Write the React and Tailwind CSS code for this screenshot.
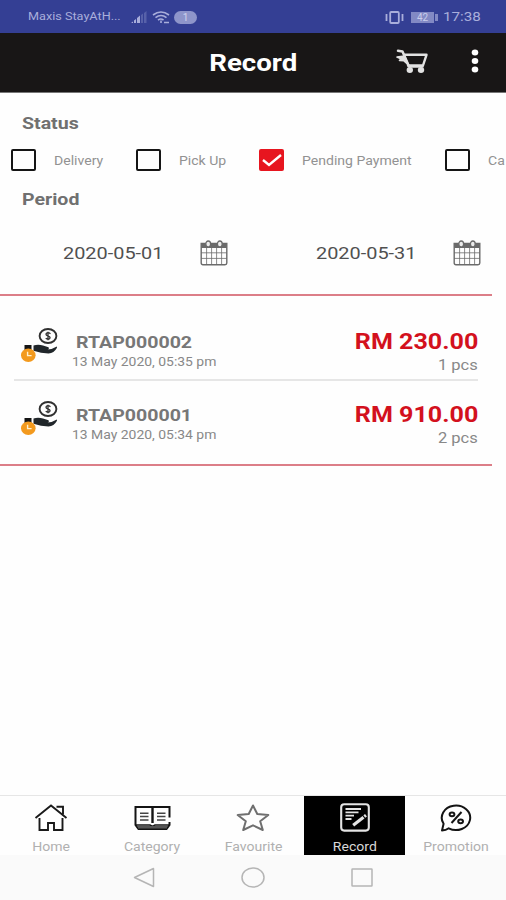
import React, { useState } from 'react';

const statusOptions = [
    { label: 'Delivery', width: 'w-[125px]' },
    { label: 'Pick Up', width: 'w-[123px]' },
    { label: 'Pending Payment', width: 'w-[186px]' },
    { label: 'Ca', width: 'w-[61px]' },
];

const records = [
    { id: 'RTAP000002', date: '13 May 2020, 05:35 pm', total: 'RM 230.00', qty: '1 pcs' },
    { id: 'RTAP000001', date: '13 May 2020, 05:34 pm', total: 'RM 910.00', qty: '2 pcs' },
];

const SignalIcon = () => (
    <svg width="17" height="13" viewBox="0 0 17 13" fill="#a9aedb">
        <path d="M0 12 L2 10.5 V12 Z M3 9.5 L5 8 V12 H3 Z M6 7 L9 4.5 V12 H6 Z" />
        <path d="M10 4 L12 2.5 V12 H10 Z M13 2 L15.5 0 V12 H13 Z" opacity="0.3" />
    </svg>
);

const WifiIcon = () => (
    <svg width="18" height="13" viewBox="0 0 18 13" fill="none" stroke="#a9aedb" strokeWidth="1.6">
        <path d="M1 4 Q9 -2 17 4" />
        <path d="M3.5 6.7 Q9 2.4 14.5 6.7" />
        <path d="M6 9.2 Q9 6.8 11.5 9.2" />
        <path d="M9 9.5 V12 M12 11.5 H17" />
    </svg>
);

const VibrateIcon = () => (
    <svg width="19" height="13" viewBox="0 0 19 13" fill="none" stroke="#a9aedb">
        <rect x="5.2" y="1" width="8.6" height="11" rx="1" strokeWidth="1.8" />
        <path d="M1.5 3 V10 M17.5 3 V10" strokeWidth="1.8" />
    </svg>
);

const CartIcon = () => (
    <svg width="33" height="25" viewBox="0 0 33 25" fill="none" stroke="#e2e2e2" strokeLinecap="round" strokeLinejoin="round">
        <path d="M3 1.8 L7.5 2.6 L14 17.5 H27.5" strokeWidth="2.5" />
        <path d="M9.5 5.8 H31.5 L28 16.5 H13" strokeWidth="2.4" />
        <path d="M2 8 L9.5 7 L13.5 16 L9 11.8 L4.5 11.5 L6 9.8 Z" fill="#e2e2e2" strokeWidth="1.6" />
        <ellipse cx="14.8" cy="21" rx="3.2" ry="3" fill="#e2e2e2" stroke="none" />
        <ellipse cx="26" cy="21" rx="3.2" ry="3" fill="#e2e2e2" stroke="none" />
    </svg>
);

const CalendarIcon = () => (
    <svg width="28" height="26" viewBox="0 0 28 26" fill="none" stroke="#6b6b6b">
        <path d="M1.2 3.5 H26.8 V23 Q26.8 24.7 25 24.7 H3 Q1.2 24.7 1.2 23 Z" strokeWidth="1.4" />
        <path d="M1.2 3.5 H26.8 V8 H1.2 Z" fill="#6b6b6b" stroke="none" />
        <path d="M1 12.8 H27 M1 18.4 H27 M6.6 8 V24.5 M11.6 8 V24.5 M16.6 8 V24.5 M21.6 8 V24.5" strokeWidth="0.8" />
        <ellipse cx="8.2" cy="4" rx="2.4" ry="3" fill="#ededed" strokeWidth="1.3" />
        <ellipse cx="19.8" cy="4" rx="2.4" ry="3" fill="#ededed" strokeWidth="1.3" />
    </svg>
);

const PaymentIcon = () => (
    <svg width="38" height="35" viewBox="0 0 38 35" fill="none">
        <ellipse cx="27" cy="8" rx="8.4" ry="7" stroke="#303030" strokeWidth="1.9" />
        <path d="M29.5 5.7 Q27 3.8 25.3 5.4 Q24.3 7.2 27 8 Q29.9 8.9 28.7 10.5 Q27 12 24.7 10.3 M27 3.7 V12.3" stroke="#303030" strokeWidth="1.3" />
        <path d="M3.5 17 H10.5 V22 H3.5 Z" fill="#151515" />
        <path d="M12.5 17.6 Q17 16 22 17.6 L27.5 19.2 Q28.6 21 26.5 21.4 Q31.5 21.2 35.8 18.4 L36 19.8 Q33 25.2 27.5 25.5 Q20 25.3 12.5 22.7 Z" fill="#20262a" />
        <ellipse cx="7.3" cy="27.3" rx="7.3" ry="6.7" fill="#f39a1e" />
        <path d="M6.6 23.7 V27.6 H10.6" stroke="#fff1d0" strokeWidth="1.4" />
    </svg>
);

const HomeIcon = () => (
    <svg width="34" height="28" viewBox="0 0 34 28" fill="none" stroke="#1a1a1a" strokeWidth="1.9">
        <path d="M1.5 14 L17 1.5 L32.5 14" />
        <path d="M22.5 2.8 H29 V10.5" />
        <path d="M5.5 14 V26 H14 V19 H20 V26 H28.5 V14" />
    </svg>
);

const CategoryIcon = () => (
    <svg width="37" height="26" viewBox="0 0 37 26" fill="none" stroke="#141414" strokeWidth="2">
        <path d="M35.5 12.5 V2 H1.5 V20 L4.5 24 H32.5 L35.5 20 V17" />
        <path d="M18.5 2 V18" strokeWidth="2.4" />
        <path d="M2 20 H16 L18.5 21.5 L21 20 H35" strokeWidth="1.6" />
        <path d="M4 22.2 H33" stroke="#555" strokeWidth="2.6" />
        <path d="M6 8.2 H14.5 M6 11.6 H14.5 M6 15 H14.5 M23 8.2 H31.5 M23 11.6 H31.5 M23 15 H31.5" stroke="#444" strokeWidth="1.5" />
    </svg>
);

const FavouriteIcon = () => (
    <svg width="34" height="28" viewBox="0 0 34 28" fill="none" stroke="#6f6f6f" strokeWidth="2" strokeLinejoin="round">
        <path d="M17 1.5 L21.3 10 L32.3 11 L24.2 17.2 L26.8 26 L17 21.3 L7.2 26 L9.8 17.2 L1.7 11 L12.7 10 Z" />
    </svg>
);

const RecordIcon = () => (
    <svg width="30" height="29" viewBox="0 0 30 29" fill="none" stroke="#e4e4e4">
        <rect x="1.2" y="1.2" width="27.6" height="26.4" rx="3" strokeWidth="2.1" />
        <path d="M5.5 6 H21 M5.5 9.4 H18.5 M5.5 12.7 H14 M5.5 16 H11.5" strokeWidth="1.8" />
        <path d="M13.2 22.2 L23.5 14.2" strokeWidth="3.2" />
        <path d="M24.3 13.5 L26 12.2" strokeWidth="3" />
    </svg>
);

const PromotionIcon = () => (
    <svg width="32" height="28" viewBox="0 0 32 28" fill="none" stroke="#141414" strokeWidth="2">
        <path d="M2 26.5 L3.6 19.8 A14.2 12.2 0 1 1 8.7 24.3 Q6 26.3 2 26.5 Z" strokeLinejoin="round" />
        <ellipse cx="12" cy="10.3" rx="2.4" ry="1.9" />
        <ellipse cx="20.6" cy="17.3" rx="2.4" ry="1.9" />
        <path d="M21.5 8 L11.5 19" />
    </svg>
);

const tabs = [
    { label: 'Home', icon: HomeIcon },
    { label: 'Category', icon: CategoryIcon },
    { label: 'Favourite', icon: FavouriteIcon },
    { label: 'Record', icon: RecordIcon },
    { label: 'Promotion', icon: PromotionIcon },
];

const StatusBar = () => (
    <div className="h-[33px] bg-[#343f94] flex items-center justify-between pl-[28px] pr-[24px] pt-px text-[#a9aedb]">
        <div className="flex items-center">
            <span className="w-[103px] text-[11.5px] whitespace-nowrap"><span className="inline-block origin-left scale-x-[1.1]">Maxis StayAtH...</span></span>
            <SignalIcon />
            <span className="ml-[4px]"><WifiIcon /></span>
            <span className="ml-[4px] w-[23px] h-[13px] rounded-full bg-[#8e95ca] text-[#d0d3ee] text-[10px] leading-[13px] text-center">1</span>
        </div>
        <div className="flex items-center">
            <VibrateIcon />
            <span className="ml-[7px] w-[23px] h-[11px] bg-[#8289c4] text-[#c9cdec] text-[10px] leading-[11px] text-center">42</span>
            <span className="ml-[1px] w-[3px] h-[7px] bg-[#8289c4]" />
            <span className="ml-[5px] w-[39px] text-[13px] whitespace-nowrap"><span className="inline-block origin-left scale-x-[1.17]">17:38</span></span>
        </div>
    </div>
);

const Header = () => (
    <div className="h-[60px] bg-[#181616] border-b border-[#777] grid grid-cols-[1fr_auto_1fr] items-center">
        <span />
        <h1 className="pt-px text-white text-[24px] leading-[28px] font-bold scale-x-[1.15]">Record</h1>
        <div className="flex items-center justify-end pr-[27px] gap-[43px] pb-[3px]">
            <CartIcon />
            <svg width="8" height="24" viewBox="0 0 8 24" fill="#fff">
                <ellipse cx="4" cy="3.5" rx="3.3" ry="2.9" />
                <ellipse cx="4" cy="12" rx="3.3" ry="2.9" />
                <ellipse cx="4" cy="20.5" rx="3.3" ry="2.9" />
            </svg>
        </div>
    </div>
);

const StatusCheckbox = ({ option, checked, onChange }) => (
    <button type="button" onClick={onChange} className={`${option.width} shrink-0 flex items-center`}>
        {checked ? (
            <span className="w-[25px] h-[22px] rounded-[2px] bg-[#e7151f] flex items-center justify-center">
                <svg width="20" height="14" viewBox="0 0 20 14" fill="none" stroke="#fff" strokeWidth="2.4">
                    <path d="M1 7 L7 12 L19 2" />
                </svg>
            </span>
        ) : (
            <span className="w-[25px] h-[22px] rounded-[2px] border-2 border-[#151515]" />
        )}
        <span className="ml-[18px] pt-[2px] text-[12px] text-[#929292] whitespace-nowrap origin-left scale-x-[1.17]">{option.label}</span>
    </button>
);

const DateField = ({ value }) => (
    <div className="w-[253px] flex items-center pl-[63px]">
        <span className="w-[137px] pt-[2px] text-[17px] text-[#505050] whitespace-nowrap"><span className="inline-block origin-left scale-x-[1.17]">{value}</span></span>
        <CalendarIcon />
    </div>
);

const RecordRow = ({ record }) => (
    <div className="h-[73px] flex items-start pl-[7px]">
        <div className="pt-[20px]"><PaymentIcon /></div>
        <div className="flex-1 pl-[13px] pt-[23px]">
            <p className="pl-[4px] text-[17px] leading-[22px] font-bold text-[#777]"><span className="inline-block origin-left scale-x-[1.15]">{record.id}</span></p>
            <p className="pt-px text-[12px] leading-[16px] text-[#888]"><span className="inline-block origin-left scale-x-[1.16]">{record.date}</span></p>
        </div>
        <div className="pt-[21px] text-right">
            <p className="text-[22px] leading-[26px] font-bold text-[#d3111d]"><span className="inline-block origin-right scale-x-[1.14]">{record.total}</span></p>
            <p className="text-[14px] leading-[20px] text-[#888]"><span className="inline-block origin-right scale-x-[1.18]">{record.qty}</span></p>
        </div>
    </div>
);

const TabBar = ({ active, onSelect }) => (
    <div className="h-[60px] border-t border-[#e6e6e6] grid grid-cols-5">
        {tabs.map(({ label, icon: Icon }) => (
            <button
                key={label}
                type="button"
                onClick={() => onSelect(label)}
                className={`flex flex-col items-center pt-[7px] pl-px ${active === label ? 'bg-black text-[#d8d8d8]' : 'text-[#b0b0b0]'}`}
            >
                <span className="h-[29px] flex items-center"><Icon /></span>
                <span className="mt-[8px] text-[12px] leading-[14px] scale-x-[1.17]">{label}</span>
            </button>
        ))}
    </div>
);

const SystemNav = () => (
    <div className="h-[45px] bg-[#fafafa] flex justify-center items-center gap-[86px]">
        <svg width="22" height="21" viewBox="0 0 22 21" fill="none" stroke="#b5b5b5" strokeWidth="1.5" strokeLinejoin="round">
            <path d="M1.5 10.5 L20.5 1.5 V19.5 Z" />
        </svg>
        <svg width="24" height="21" viewBox="0 0 24 21" fill="none" stroke="#b5b5b5" strokeWidth="1.5">
            <ellipse cx="12" cy="10.5" rx="11" ry="9.5" />
        </svg>
        <svg width="22" height="19" viewBox="0 0 22 19" fill="none" stroke="#b5b5b5" strokeWidth="1.5">
            <rect x="1" y="1" width="20" height="17" rx="0.5" />
        </svg>
    </div>
);

const App = () => {
    const [selected, setSelected] = useState('Pending Payment');
    const [activeTab, setActiveTab] = useState('Record');

    return (
        <div className="w-[506px] h-[900px] overflow-hidden bg-[#fefefe] flex flex-col font-[Roboto,sans-serif]">
            <StatusBar />
            <Header />

            <div className="h-[201px] flex flex-col">
                <h2 className="pl-[22px] pt-[19px] text-[17px] leading-[22px] font-bold text-[#707070]"><span className="inline-block origin-left scale-x-[1.15]">Status</span></h2>
                <div className="mt-[15px] h-[22px] pl-[11px] flex items-center overflow-hidden">
                    {statusOptions.map(option => (
                        <StatusCheckbox
                            key={option.label}
                            option={option}
                            checked={selected === option.label}
                            onChange={() => setSelected(option.label)}
                        />
                    ))}
                </div>
                <h2 className="pl-[22px] mt-[17px] text-[17px] leading-[22px] font-bold text-[#707070]"><span className="inline-block origin-left scale-x-[1.15]">Period</span></h2>
                <div className="mt-[29px] flex">
                    <DateField value="2020-05-01" />
                    <DateField value="2020-05-31" />
                </div>
            </div>

            {/* Record list */}
            <div className="w-[492px] h-[172px] border-y-2 border-[#dc7e88] pl-[14px] pr-[14px] pt-[12px]">
                {records.map((record, i) => (
                    <div key={record.id} className={i === 0 ? 'border-b-2 border-[#e6e6e6] h-[73px]' : ''}>
                        <RecordRow record={record} />
                    </div>
                ))}
            </div>

            <div className="flex-1" />
            <TabBar active={activeTab} onSelect={setActiveTab} />
            <SystemNav />
        </div>
    );
};

export default App;
